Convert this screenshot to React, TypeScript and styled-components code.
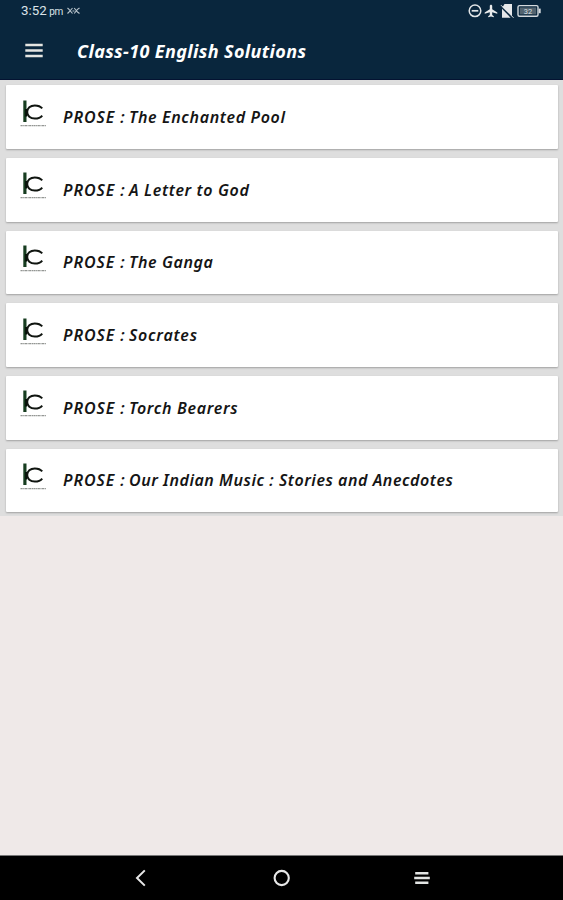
import React from 'react';
import styled, { createGlobalStyle } from 'styled-components';

const GlobalStyle = createGlobalStyle`
  * { box-sizing: border-box; }
  body { margin: 0; background: #efe9e8; }
`;

const Screen = styled.div`
  display: flex;
  flex-direction: column;
  width: 563px;
  height: 900px;
  overflow: hidden;
  background: #efe9e8;
  font-family: 'Noto Sans', 'Open Sans', sans-serif;
`;

const Header = styled.header`
  height: 80px;
  flex: none;
  background: #09263d;
  border-bottom: 1px solid #041332;
  color: #fff;
`;

const StatusBar = styled.div`
  display: flex;
  align-items: center;
  justify-content: space-between;
  height: 22px;
  padding: 0 22px 0 21px;
  font-family: Roboto, sans-serif;
`;

const Clock = styled.div`
  display: flex;
  align-items: baseline;
  color: #dce3e8;
  font-size: 13.3px;
  line-height: 22px;
`;

const Meridiem = styled.span`
  margin: 0 4px 0 2.5px;
  font-size: 10px;
  letter-spacing: -0.3px;
`;

const StatusIcons = styled.div`
  display: flex;
  align-items: center;
  height: 20px;
`;

const Toolbar = styled.div`
  display: flex;
  align-items: center;
  height: 57px;
  padding-left: 25px;
`;

const MenuButton = styled.button`
  display: flex;
  width: 18px;
  height: 16px;
  padding: 0;
  border: 0;
  background: none;
`;

const Title = styled.h1`
  margin: 0 0 0 34px;
  font-size: 18px;
  font-style: italic;
  font-weight: 700;
  line-height: 24px;
  letter-spacing: 0.37px;
  white-space: nowrap;
`;

const List = styled.ul`
  display: flex;
  flex-direction: column;
  gap: 9px;
  height: 436px;
  flex: none;
  margin: 0;
  padding: 5.3px 5px 3px 6px;
  list-style: none;
  background: #dedede;
`;

const Card = styled.li`
  display: flex;
  align-items: center;
  height: 63.65px;
  flex: none;
  padding-left: 14px;
  background: #fff;
  border-radius: 1px;
  box-shadow: 0 1px 2px rgba(0, 0, 0, 0.28);
`;

const LogoMark = styled.svg`
  flex: none;
  margin-bottom: 7px;
`;

const Label = styled.div`
  display: flex;
  margin-left: 16px;
  color: #151515;
  font-size: 16px;
  font-style: italic;
  font-weight: 600;
  line-height: 24px;
  white-space: nowrap;
`;

const Kind = styled.span`
  width: 66px;
  letter-spacing: 0.9px;
`;

const Name = styled.span<{ $tracking: number }>`
  letter-spacing: ${({ $tracking }) => $tracking}px;
`;

const NavBar = styled.nav`
  display: flex;
  justify-content: space-between;
  align-items: center;
  height: 45px;
  flex: none;
  margin-top: auto;
  padding: 0 132px;
  border-top: 1px solid #777;
  background: #000;
`;

const chapters = [
  { title: 'The Enchanted Pool', tracking: 0.63 },
  { title: 'A Letter to God', tracking: 0.63 },
  { title: 'The Ganga', tracking: 0.6 },
  { title: 'Socrates', tracking: 0.75 },
  { title: 'Torch Bearers', tracking: 0.68 },
  { title: 'Our Indian Music : Stories and Anecdotes', tracking: 0.54 },
];

const Logo = () => (
  <LogoMark width="27" height="34" viewBox="0 0 27 34" fill="none">
    <path d="M4.9 3.5V25" stroke="#173d20" strokeWidth="3.2" />
    <path d="M6.2 12v7.5" stroke="#050d06" strokeWidth="2" />
    <path d="M22.2 11.4C20.5 9.2 17.8 8.4 14.8 8.4C10.3 8.4 7.2 11.2 7.2 15S10.3 21.6 14.8 21.6C17.8 21.6 20.5 20.8 22.2 18.6" stroke="#101510" strokeWidth="2" />
    <path d="M0.5 28.6H26" stroke="#6f736f" strokeWidth="1.3" strokeDasharray="2.2 .5 1.2 .4" opacity=".75" />
  </LogoMark>
);

export default function App() {
  return (
    <Screen>
      <GlobalStyle />
      <Header>
        <StatusBar>
          <Clock>
            3:52<Meridiem>pm</Meridiem>
            <svg width="13" height="8" viewBox="0 0 13 8" fill="none" stroke="#b9c4cc" strokeWidth="1.1">
              <path d="M.5 1 2 2.4 5.5 6.5M.5 6.5 2 5 5.5 1M5.5 4h2M7.2 1 10.5 5 12.5 6.5M7.2 6.5 10.5 2.4 12.5 1" />
            </svg>
          </Clock>
          <StatusIcons>
            <svg width="73" height="18" viewBox="0 0 73 18" fill="none">
              <circle cx="7" cy="8.8" r="5.8" stroke="#e2e5e7" strokeWidth="1.5" />
              <path d="M3.7 8.8h6.6" stroke="#e2e5e7" strokeWidth="1.7" />
              <path d="M23 2.8c.8 0 1.2.6 1.2 1.3v3.2l5.1 3.1v1.4l-5.1-1.5v2.7l1.6 1.2v1l-2.8-.7-2.8.7v-1l1.6-1.2v-2.7l-5.1 1.5v-1.4l5.1-3.1V4.1c0-.7.4-1.3 1.2-1.3z" fill="#e9ebec" />
              <path d="M36.5 2h7.5V14l-9.5-8.8z" fill="#e5e7e9" />
              <path d="M34 6.8 42.6 15.7H34z" fill="#e5e7e9" />
              <path d="M33 3.2 45.5 15.8" stroke="#e5e7e9" strokeWidth="1" />
              <rect x="50" y="3.6" width="20" height="10.6" rx="1.5" stroke="#d5dade" strokeWidth="1.4" />
              <rect x="51.8" y="5.4" width="16.4" height="7" fill="#52636f" />
              <path d="M71.7 6.6v4.6" stroke="#d5dade" strokeWidth="2" />
              <text x="60" y="11.7" textAnchor="middle" fill="#dde2e5" fontSize="7.5" fontFamily="Roboto, sans-serif">32</text>
            </svg>
          </StatusIcons>
        </StatusBar>
        <Toolbar>
          <MenuButton aria-label="Menu">
            <svg width="18" height="16" viewBox="0 0 18 16" stroke="#e5e5e2" strokeWidth="2.6">
              <path d="M.3 2h17.4M.3 7.5h17.4M.3 13h17.4" />
            </svg>
          </MenuButton>
          <Title>Class-10 English Solutions</Title>
        </Toolbar>
      </Header>
      <List>
        {chapters.map(({ title, tracking }) => (
          <Card key={title}>
            <Logo />
            <Label>
              <Kind>PROSE :</Kind>
              <Name $tracking={tracking}>{title}</Name>
            </Label>
          </Card>
        ))}
      </List>
      <NavBar>
        <svg width="18" height="20" viewBox="0 0 18 20" fill="none" stroke="#e8e8e8" strokeWidth="2">
          <path d="M12.8 2.4 5 10l7.8 7.6" />
        </svg>
        <svg width="18" height="18" viewBox="0 0 18 18" fill="none" stroke="#e8e8e8" strokeWidth="2.1">
          <circle cx="8.7" cy="9" r="7.1" />
        </svg>
        <svg width="18" height="16" viewBox="0 0 18 16" stroke="#e3e5e4" strokeWidth="2.5">
          <path d="M2.2 3.3h13.2M1.2 8h15.6M2.2 12.7h13.2" />
        </svg>
      </NavBar>
    </Screen>
  );
}
